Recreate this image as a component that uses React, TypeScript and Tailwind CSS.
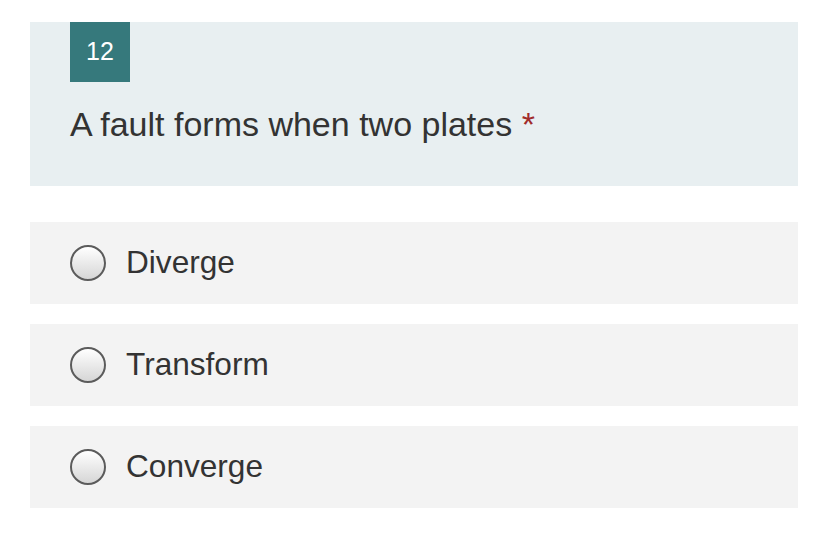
const options = ['Diverge', 'Transform', 'Converge'];

const Radio = () => (
  <span className="h-9 w-9 shrink-0 rounded-full border-2 border-[#5b5b5b] bg-gradient-to-b from-white to-[#d6d6d6]" />
);

export default function App() {
  return (
    <div className="min-h-[556px] w-[828px] bg-white px-[30px] pt-[22px] font-['Liberation_Sans',Arial,sans-serif] text-[#333333]">
      <div className="h-[164px] bg-[#e8eff1] px-10">
        <div className="flex h-[60px] w-[60px] items-center justify-center bg-[#36797c] text-[25px] text-white">
          12
        </div>
        <h2 className="mt-[23px] text-[34px] leading-[39px]">
          A fault forms when two plates <span className="text-[#a12b2b]">*</span>
        </h2>
      </div>

      <div className="mt-9 flex flex-col gap-5">
        {options.map((label) => (
          <label key={label} className="flex h-[82px] items-center gap-5 bg-[#f3f3f3] px-10">
            <Radio />
            <span className="text-[31.6px] leading-none">{label}</span>
          </label>
        ))}
      </div>
    </div>
  );
}
